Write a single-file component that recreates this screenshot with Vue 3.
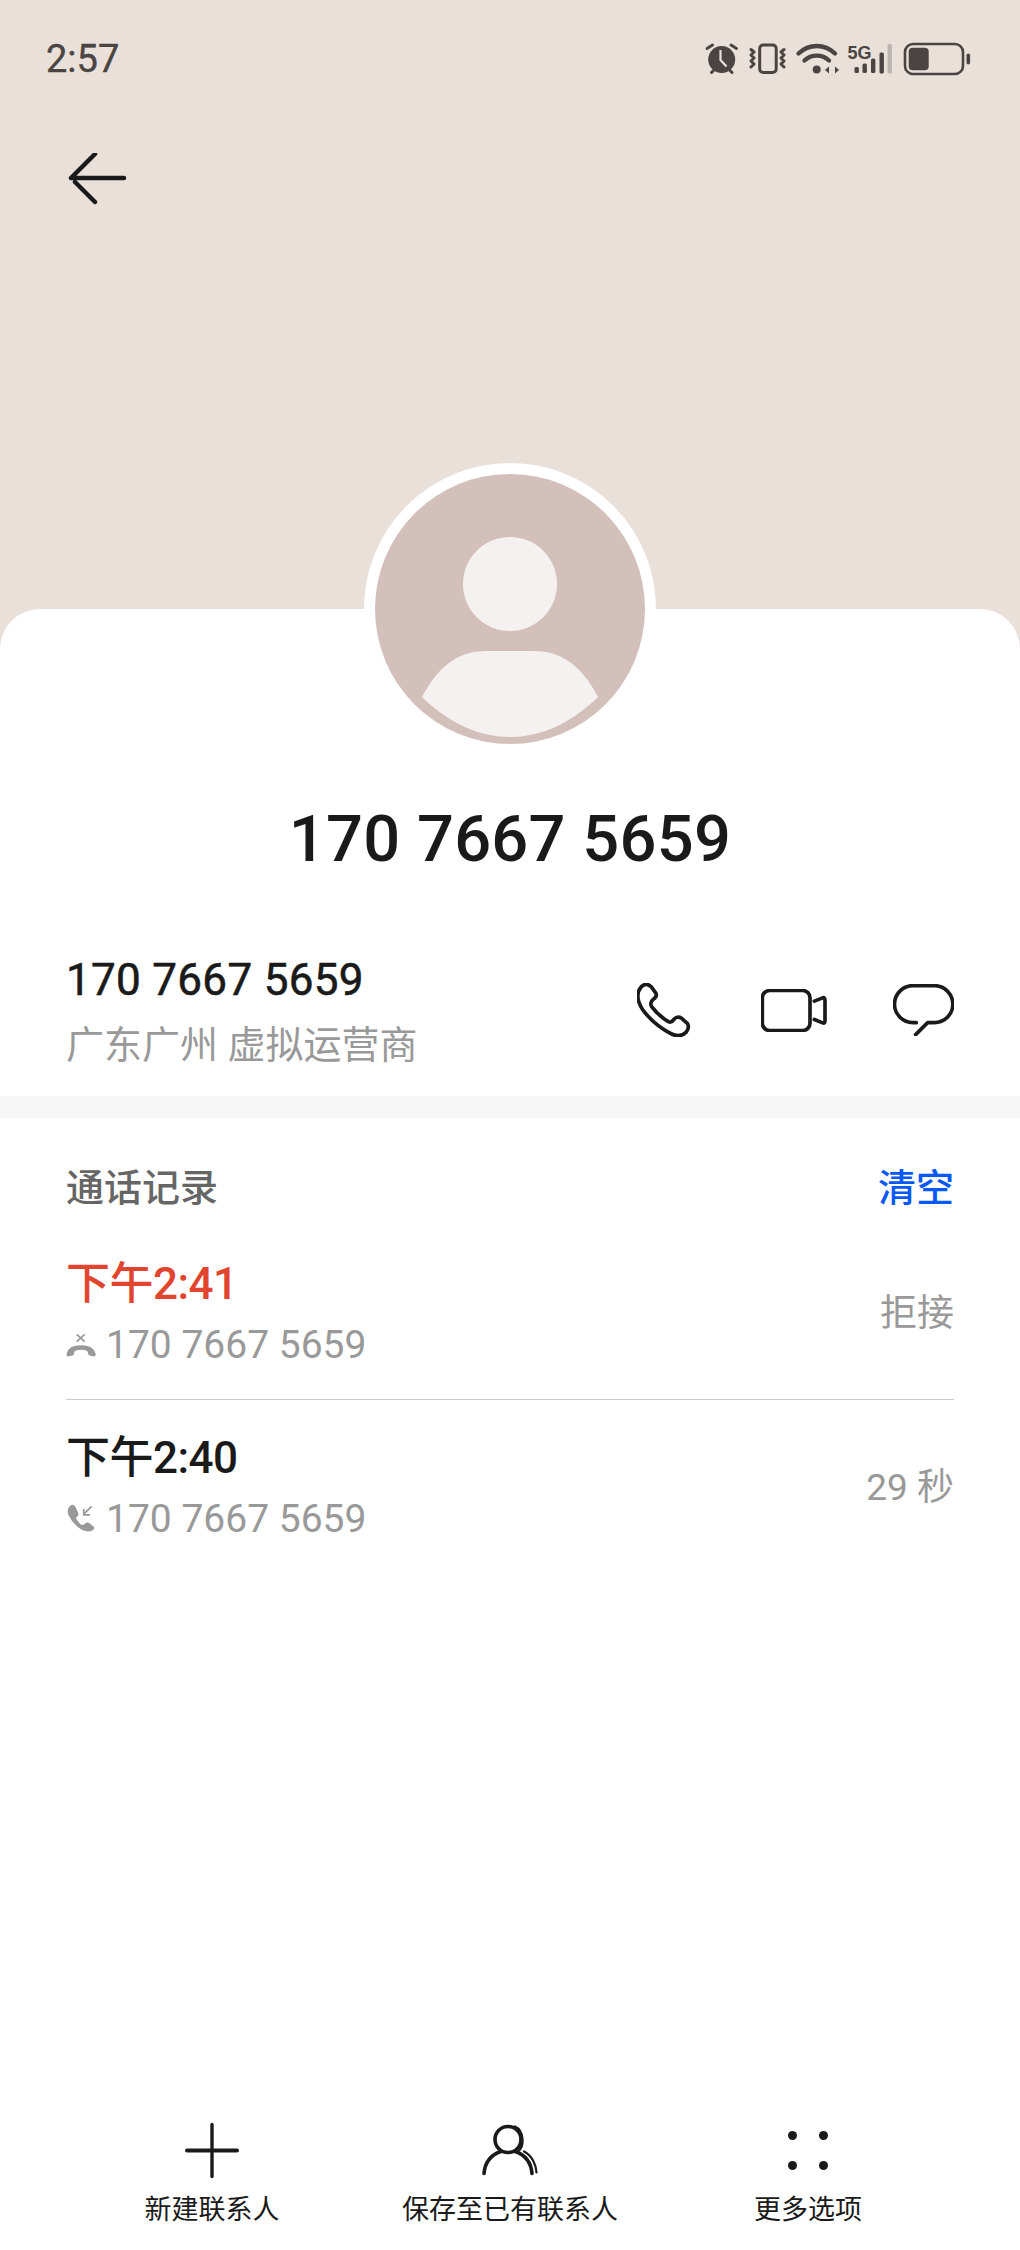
<template>
  <div class="page">
    <div class="top">
      <div class="status-bar">
        <span class="clock">2:57</span>
        <svg class="status-icons" width="270" height="38" viewBox="0 0 270 38">
          <!-- alarm -->
          <g class="ico-dark">
            <circle cx="18.700" cy="19.500" r="13.500" />
            <path d="M4 8.500 9.500 5M28 5l5.500 3.500M8.500 32.500l3.500-3.500M29 32.500 25.500 29" class="ico-line" />
            <path d="M17.500 10v10l6 6.500" fill="none" stroke="#eae0da" stroke-width="2.200" />
          </g>
          <!-- vibrate -->
          <rect x="56.700" y="5" width="16.500" height="27.500" rx="3.500" class="ico-line" stroke-width="3.400" />
          <path d="M48 9.500l3 2.500-3 3 3 3-3 3 3 3-3 3M81 9.500l-3 2.500 3 3-3 3 3 3-3 3 3 3" class="ico-line" stroke-width="2.600" />
          <!-- wifi -->
          <path d="M95.500 13.500c10.500-10 26-10 36.500 0M101.500 20.500c7-6.500 17.500-6.500 24.500 0" class="ico-line thick" />
          <circle cx="113.700" cy="29.500" r="4" fill="#4a4543" />
          <path d="M122 30l4-3.500v7zM127.500 26.500v7M132 26.500l4 3.500-4 3.500z" fill="#4a4543" />
          <!-- signal -->
          <text x="144.500" y="18.500" class="five-g">5G</text>
          <rect x="151.500" y="27" width="4.400" height="6" rx="1.500" fill="#4a4543" />
          <rect x="159.500" y="23.500" width="4.400" height="9.500" rx="1.500" fill="#4a4543" />
          <rect x="168" y="18.500" width="4.400" height="14.500" rx="1.500" fill="#4a4543" />
          <rect x="176.500" y="12.500" width="4.400" height="21" rx="1.500" fill="#4a4543" />
          <rect x="184.500" y="4" width="4.400" height="29.500" rx="1.500" fill="#bdb5b1" />
          <!-- battery -->
          <rect x="202" y="4" width="58" height="30" rx="8" fill="none" stroke="#4a4543" stroke-width="2.600" />
          <rect x="205.700" y="7.700" width="20" height="22.500" rx="4" fill="#4a4543" />
          <rect x="263.500" y="13.500" width="3.600" height="11" rx="1.800" fill="#4a4543" />
        </svg>
      </div>
      <svg class="back" width="60" height="56" viewBox="0 0 60 56">
        <path d="M3 25H56M3 25 27 1M7 29 27 49" />
      </svg>
    </div>

    <div class="card">
      <div class="avatar">
        <svg width="270" height="270" viewBox="0 0 270 270">
          <circle cx="135" cy="135" r="135" fill="#d4c0ba" />
          <circle cx="135" cy="110" r="47" fill="#f5f1f0" />
          <path d="M47 223C62 195 80 177 112 177H158C190 177 208 195 223 223C195 250 165 263 135 263C105 263 75 250 47 223Z" fill="#f5f1f0" />
        </svg>
      </div>
      <div class="title">{{ number }}</div>

      <div class="contact">
        <div>
          <div class="contact-num">{{ number }}</div>
          <div class="contact-sub">广东广州 虚拟运营商</div>
        </div>
        <div class="actions">
          <svg class="call" width="54" height="54" viewBox="111 98 162 160">
            <path d="M124 108Q140 93 155 110L168 128Q172 138 160 146Q148 155 155 168Q175 195 205 213Q215 217 222 206Q232 195 245 203L262 218Q270 230 258 245Q240 262 215 250Q165 225 130 180Q100 135 124 108Z" />
          </svg>
          <svg width="66" height="43" viewBox="483 114 198 128">
            <rect x="487" y="118" width="143" height="120" rx="22" />
            <path d="M643 150 668 140Q675 138 675 147V208Q675 218 668 215L643 205" />
          </svg>
          <svg width="61" height="52" viewBox="878 103 183 156">
            <path d="M948 219H938A55 55 0 0 1 938 108H1002A55 55 0 0 1 1002 219H982L946 255" />
          </svg>
        </div>
      </div>

      <div class="band"></div>

      <div class="records">
        <div class="records-head">
          <span>通话记录</span>
          <span class="clear">清空</span>
        </div>
        <div v-for="rec in records" :key="rec.time" class="record">
          <div>
            <div class="rec-time" :class="{ missed: rec.missed }">{{ rec.time }}</div>
            <div class="rec-sub">
              <svg v-if="rec.missed" width="30" height="26" viewBox="78 275 90 78">
                <path d="M80 340Q85 315 123 315Q160 315 167 340Q168 350 158 348L146 345 142 332Q123 325 104 332L100 345 88 348Q78 350 80 340Z" fill="#999" />
                <path d="M110 282 134 304M134 282 110 304" fill="none" stroke="#999" stroke-width="5" />
              </svg>
              <svg v-else width="30" height="30" viewBox="80 793 88 88">
                <path d="M90 800Q100 790 108 802L116 820Q118 828 110 832Q108 838 122 852Q130 858 136 850Q142 844 150 850L160 858Q166 866 158 870Q145 878 125 868Q100 852 87 825Q82 810 90 800Z" fill="#999" />
                <path d="M155 800 132 823M132 808V825H150" fill="none" stroke="#999" stroke-width="5" />
              </svg>
              <span>{{ number }}</span>
            </div>
          </div>
          <span class="rec-note">{{ rec.note }}</span>
        </div>
      </div>

      <div class="footer">
        <div class="foot-item">
          <svg width="54" height="54" viewBox="0 0 54 54">
            <path d="M27 1V53" stroke-width="3.400" />
            <path d="M2 27H25M29 27H52" stroke-width="4" />
          </svg>
          <span>新建联系人</span>
        </div>
        <div class="foot-item">
          <svg width="56" height="52" viewBox="0 0 56 52">
            <circle cx="26" cy="15" r="13" stroke-width="3.600" />
            <path d="M2 49C3 37 10 30 19 27M33 27C42 30 49 37 50 49" stroke-width="3.600" />
            <path d="M33 2C42 6 43 22 36 27M42 27C50 31 54 40 54.500 48" stroke-width="2.200" />
          </svg>
          <span>保存至已有联系人</span>
        </div>
        <div class="foot-item">
          <svg class="dots" width="54" height="54" viewBox="0 0 54 54">
            <circle cx="11.500" cy="12" r="4.500" />
            <circle cx="42.500" cy="12" r="4.500" />
            <circle cx="11.500" cy="42" r="4.500" />
            <circle cx="42.500" cy="42" r="4.500" />
          </svg>
          <span>更多选项</span>
        </div>
      </div>
    </div>
  </div>
</template>

<script setup>
const number = '170 7667 5659'

const records = [
  { time: '下午2:41', note: '拒接', missed: true },
  { time: '下午2:40', note: '29 秒', missed: false }
]
</script>

<style>
html,
body {
  margin: 0;
  background: #fff;
}
</style>

<style scoped>
.page {
  width: 1020px;
  height: 2250px;
  display: flex;
  flex-direction: column;
  overflow: hidden;
  background: #eae0da;
  color: #1a1a1a;
  font-family: Roboto, "Noto Sans CJK SC", sans-serif;
}

.top {
  height: 609px;
  flex-shrink: 0;
}

.status-bar {
  display: flex;
  justify-content: space-between;
  align-items: center;
  height: 38px;
  padding: 40px 47px 0 46px;
}

.clock {
  font-size: 38px;
  color: #4a4543;
  -webkit-text-stroke: 0.4px #4a4543;
}

.ico-dark {
  fill: #4a4543;
}

.ico-line {
  fill: none;
  stroke: #4a4543;
  stroke-width: 3;
  stroke-linecap: round;
  stroke-linejoin: round;
}

.ico-line.thick {
  stroke-width: 4.400;
}

.five-g {
  font-family: "Liberation Sans", sans-serif;
  font-size: 18px;
  font-weight: 700;
  fill: #4a4543;
}

.back {
  display: block;
  margin: 75px 0 0 68px;
}

.back path {
  fill: none;
  stroke: #1a1a1a;
  stroke-width: 4.500;
  stroke-linecap: round;
}

.card {
  flex: 1;
  display: flex;
  flex-direction: column;
  background: #fff;
  border-radius: 40px 40px 0 0;
}

.avatar {
  align-self: center;
  width: 270px;
  height: 270px;
  margin-top: -146px;
  border: 11px solid #fff;
  border-radius: 50%;
  background: #fff;
}

.avatar svg {
  display: block;
}

.title {
  margin-top: 44px;
  line-height: 80px;
  font-size: 65px;
  font-weight: 500;
  letter-spacing: 0.3px;
  text-align: center;
}

.contact {
  display: flex;
  justify-content: space-between;
  align-items: center;
  padding: 71px 66px 26px;
}

.contact-num {
  line-height: 60px;
  font-size: 44px;
  letter-spacing: 0.3px;
  -webkit-text-stroke: 0.6px #1a1a1a;
}

.contact-sub {
  margin-top: 10px;
  line-height: 50px;
  font-size: 38px;
  color: #999;
}

.actions {
  display: flex;
  align-items: center;
  gap: 66px;
}

.actions svg {
  fill: none;
  stroke: #1a1a1a;
  stroke-width: 11;
  stroke-linecap: round;
  stroke-linejoin: round;
}

.actions .call {
  margin-right: 4px;
}

.band {
  height: 22px;
  background: #f7f7f7;
}

.records {
  padding: 40px 66px 0;
}

.records-head {
  display: flex;
  justify-content: space-between;
  margin-bottom: 8px;
  line-height: 60px;
  font-size: 38px;
  font-weight: 500;
  color: #666;
}

.clear {
  color: #0a59f7;
}

.record {
  display: flex;
  justify-content: space-between;
  align-items: center;
  padding: 28px 0 29px;
  border-bottom: 1px solid #ccc;
}

.record:last-child {
  border-bottom: none;
}

.rec-time {
  line-height: 60px;
  font-size: 44px;
  font-weight: 500;
  letter-spacing: -0.5px;
}

.rec-time.missed {
  color: #e2452f;
}

.rec-sub {
  display: flex;
  align-items: center;
  gap: 10px;
  margin-top: 6px;
  line-height: 50px;
  font-size: 39px;
  color: #999;
}

.rec-note {
  padding-bottom: 4px;
  font-size: 37px;
  color: #999;
}

.footer {
  display: grid;
  grid-template-columns: repeat(3, 298px);
  justify-content: center;
  margin-top: auto;
  padding-bottom: 20px;
}

.foot-item {
  display: flex;
  flex-direction: column;
  align-items: center;
  gap: 11px;
  font-size: 27px;
  line-height: 40px;
}

.foot-item svg {
  height: 57px;
  fill: none;
  stroke: #1a1a1a;
  stroke-linecap: round;
}

.foot-item .dots {
  fill: #1a1a1a;
  stroke: none;
}
</style>
